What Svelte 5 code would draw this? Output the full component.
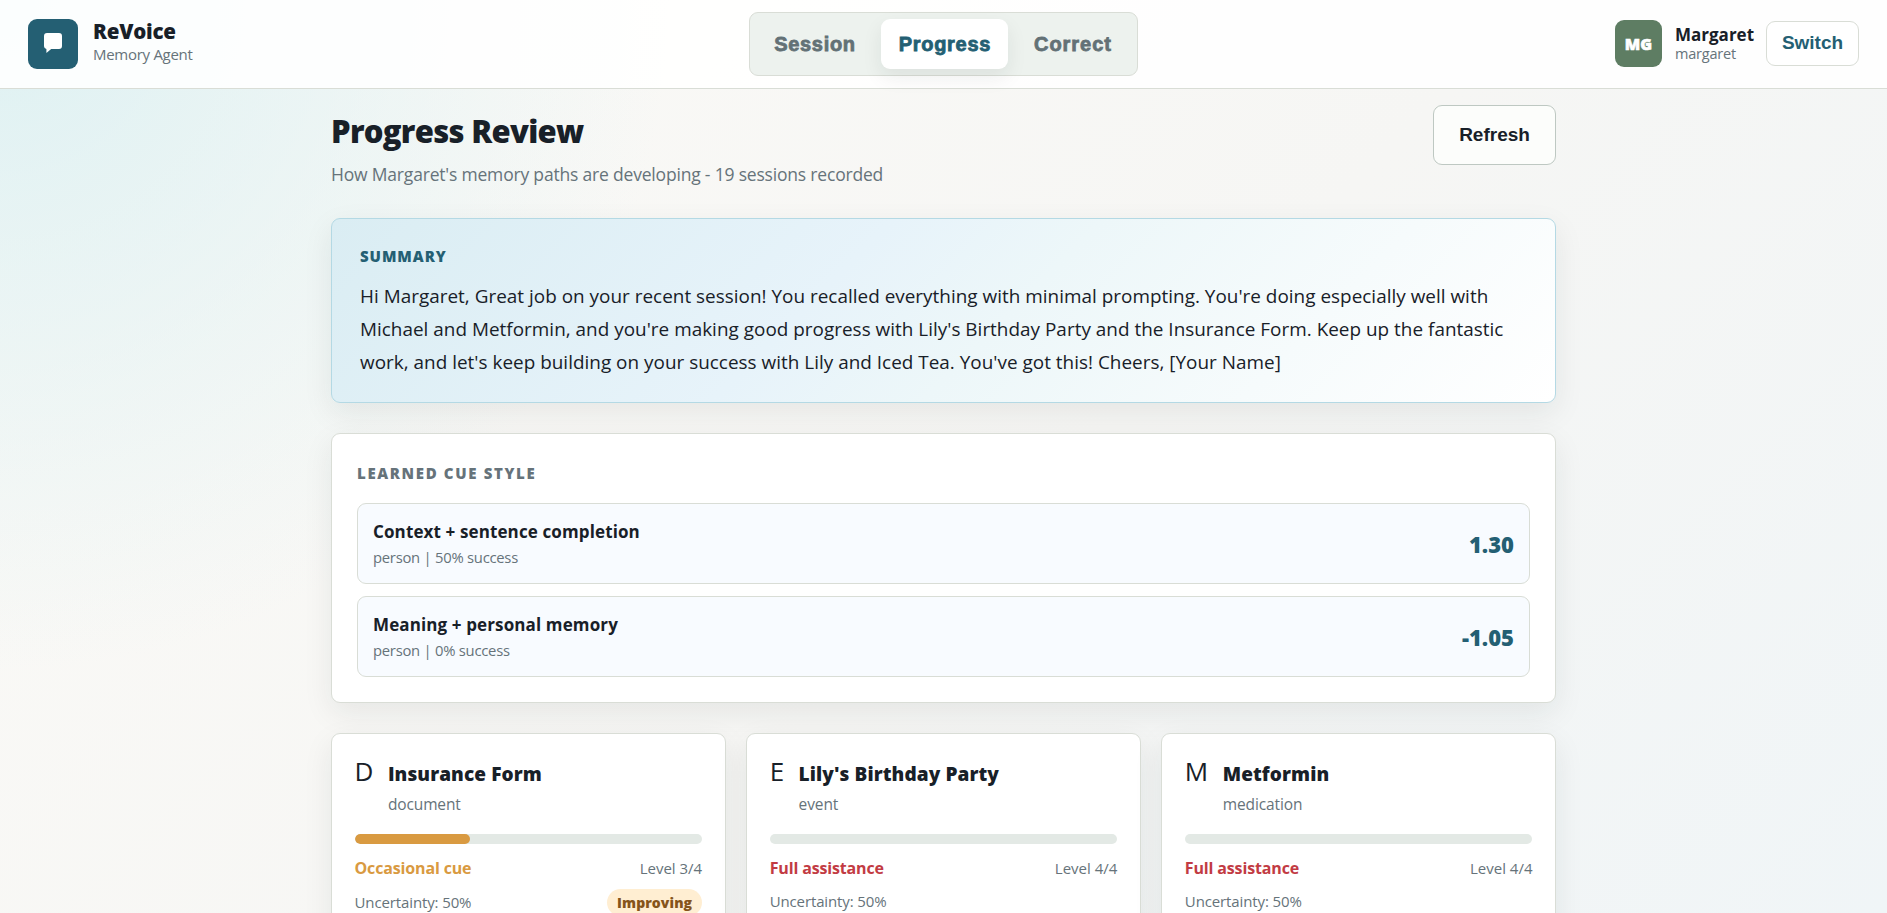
<script>
  let activeTab = "Progress";

  const tabs = ["Session", "Progress", "Correct"];

  const cues = [
    { name: "Context + sentence completion", detail: "person | 50% success", score: "1.30" },
    { name: "Meaning + personal memory", detail: "person | 0% success", score: "-1.05" },
  ];

  const memories = [
    { icon: "D", name: "Insurance Form", type: "document", status: "Occasional cue", tone: "amber", level: 3, uncertainty: 50, trend: "Improving" },
    { icon: "E", name: "Lily's Birthday Party", type: "event", status: "Full assistance", tone: "red", level: 4, uncertainty: 50 },
    { icon: "M", name: "Metformin", type: "medication", status: "Full assistance", tone: "red", level: 4, uncertainty: 50 },
  ];

  // lower level means more independence
  const progress = (level) => ((4 - level) / 3) * 100;
</script>

<div class="page">
  <header class="topbar">
    <div class="brand">
      <div class="brand-mark">
        <svg width="18" height="20" viewBox="0 0 18 20" aria-hidden="true">
          <path
            d="M3 0h12a3 3 0 0 1 3 3v10a3 3 0 0 1-3 3H7.2L2.4 20V16A3 3 0 0 1 0 13V3a3 3 0 0 1 3-3z"
            fill="#fff"
          />
        </svg>
      </div>
      <div class="brand-text">
        <div class="brand-name">ReVoice</div>
        <div class="brand-sub">Memory Agent</div>
      </div>
    </div>

    <nav class="tabs">
      {#each tabs as tab}
        <button
          class="tab"
          class:tab-active={activeTab === tab}
          on:click={() => (activeTab = tab)}>{tab}</button
        >
      {/each}
    </nav>

    <div class="user">
      <div class="avatar">MG</div>
      <div class="user-text">
        <div class="user-name">Margaret</div>
        <div class="user-id">margaret</div>
      </div>
      <button class="switch">Switch</button>
    </div>
  </header>

  <main>
    <div class="heading">
      <div>
        <h1>Progress Review</h1>
        <p class="subtitle">
          How Margaret's memory paths are developing - 19 sessions recorded
        </p>
      </div>
      <button class="refresh">Refresh</button>
    </div>

    <section class="card summary">
      <h2 class="label">Summary</h2>
      <p>
        Hi Margaret, Great job on your recent session! You recalled everything with minimal prompting. You're doing especially well with<br />
        Michael and Metformin, and you're making good progress with Lily's Birthday Party and the Insurance Form. Keep up the fantastic<br />
        work, and let's keep building on your success with Lily and Iced Tea. You've got this! Cheers, [Your Name]
      </p>
    </section>

    <section class="card cues">
      <h2 class="label">Learned cue style</h2>
      <div class="cue-list">
        {#each cues as cue}
          <div class="cue">
            <div>
              <div class="cue-name">{cue.name}</div>
              <div class="cue-detail">{cue.detail}</div>
            </div>
            <div class="score">{cue.score}</div>
          </div>
        {/each}
      </div>
    </section>

    <div class="memories">
      {#each memories as memory}
        <article class="card memory">
          <div class="memory-head">
            <span class="memory-icon">{memory.icon}</span>
            <div>
              <h3>{memory.name}</h3>
              <div class="memory-type">{memory.type}</div>
            </div>
          </div>
          <div class="track">
            <div class="fill {memory.tone}" style="width: {progress(memory.level)}%"></div>
          </div>
          <div class="status-row">
            <span class="status {memory.tone}">{memory.status}</span>
            <span class="level">Level {memory.level}/4</span>
          </div>
          <div class="uncertainty-row">
            <span class="uncertainty">Uncertainty: {memory.uncertainty}%</span>
            {#if memory.trend}
              <span class="pill">{memory.trend}</span>
            {/if}
          </div>
        </article>
      {/each}
    </div>
  </main>
</div>

<style>
  :global(body) {
    margin: 0;
    overflow: hidden;
  }

  .page {
    height: 100vh;
    overflow: hidden;
    color: #182028;
    font-family: "Open Sans", "Noto Sans", sans-serif;
    background:
      radial-gradient(circle at top left, rgba(219, 240, 242, 0.92), rgba(219, 240, 242, 0) 670px),
      linear-gradient(135deg, #fbfaf7 0%, #f6f6f4 55%, #f0f5f7 100%);
  }

  h1,
  h2,
  h3,
  p {
    margin: 0;
  }

  button {
    box-sizing: border-box;
    padding: 0;
    font-family: "Liberation Sans", Arial, sans-serif;
    font-weight: 700;
    cursor: pointer;
  }

  .topbar {
    box-sizing: border-box;
    height: 89px;
    padding: 0 28px;
    display: grid;
    grid-template-columns: 1fr auto 1fr;
    align-items: center;
    border-bottom: 1px solid #d9ddd6;
    background: rgba(255, 255, 255, 0.88);
  }

  .brand {
    display: flex;
    align-items: center;
    gap: 15px;
  }

  .brand-mark {
    width: 50px;
    height: 50px;
    border-radius: 9px;
    background: #245f73;
    display: flex;
    align-items: center;
    justify-content: center;
  }

  .brand-mark svg {
    margin-bottom: 2px;
  }

  .brand-text {
    padding-bottom: 4px;
  }

  .brand-name {
    font-size: 20.5px;
    font-weight: 800;
    line-height: 23px;
    letter-spacing: -0.2px;
  }

  .brand-sub {
    margin-top: 1px;
    font-size: 15px;
    line-height: 20px;
    letter-spacing: -0.28px;
    color: #66737a;
  }

  .tabs {
    display: flex;
    gap: 8px;
    padding: 6px;
    border: 1px solid #d9ddd6;
    border-radius: 9px;
    background: #edf2ee;
  }

  .tab {
    height: 50px;
    padding: 0 17px 0 18px;
    border: 0;
    border-radius: 9px;
    background: none;
    font-size: 20px;
    letter-spacing: 0.7px;
    color: #637176;
    -webkit-text-stroke: 0.8px currentColor;
  }

  .tab:last-child {
    padding-right: 19px;
    letter-spacing: 0.95px;
  }

  .tab-active {
    color: #245f73;
    background: #fff;
    box-shadow: 0 8px 20px rgba(24, 32, 40, 0.08);
  }

  .user {
    display: flex;
    align-items: center;
    justify-content: flex-end;
    padding-bottom: 1px;
  }

  .avatar {
    width: 47px;
    height: 47px;
    line-height: 48px;
    border-radius: 9px;
    background: #5e7d63;
    color: #fff;
    font-size: 16px;
    font-weight: 800;
    text-align: center;
    -webkit-text-stroke: 0.6px currentColor;
  }

  .user-text {
    margin: 0 13px;
    width: 78px;
    padding-bottom: 1px;
    white-space: nowrap;
  }

  .user-name {
    font-size: 17px;
    font-weight: 700;
    line-height: 20px;
  }

  .user-id {
    font-size: 14.5px;
    line-height: 17px;
    letter-spacing: -0.2px;
    color: #66737a;
  }

  .switch {
    width: 93px;
    height: 45px;
    padding-bottom: 1px;
    border: 1px solid #d9ddd6;
    border-radius: 9px;
    background: #fff;
    color: #245f73;
    font-size: 19px;
  }

  main {
    box-sizing: border-box;
    width: 1225px;
    margin: 0 auto;
    padding-top: 16px;
  }

  .heading {
    display: flex;
    justify-content: space-between;
    align-items: flex-start;
    margin-bottom: 30px;
  }

  h1 {
    padding-top: 1px;
    font-size: 31px;
    font-weight: 800;
    line-height: 50px;
    letter-spacing: -0.7px;
  }

  .subtitle {
    margin-top: 4px;
    font-size: 17.5px;
    line-height: 28px;
    letter-spacing: -0.19px;
    color: #66737a;
  }

  .refresh {
    width: 123px;
    height: 60px;
    padding-bottom: 1px;
    border: 1px solid #bec8c2;
    border-radius: 9px;
    background: #fcfdfb;
    color: #182028;
    font-size: 19px;
  }

  .card {
    border: 1px solid #d9ddd6;
    border-radius: 9px;
    background: #fff;
    box-shadow: 0 10px 30px rgba(24, 32, 40, 0.08);
  }

  .label {
    font-size: 15px;
    font-weight: 800;
    text-transform: uppercase;
  }

  .summary {
    padding: 27px 27px 23px 28px;
    margin-bottom: 30px;
    border-color: #b4d9e4;
    background: linear-gradient(135deg, #daedf3 0%, #e7f3fa 40%, #edf7f9 55%, #fff 100%);
  }

  .summary .label {
    line-height: 20px;
    letter-spacing: 0.95px;
    color: #245f73;
  }

  .summary p {
    margin-top: 14px;
    font-size: 18.9px;
    line-height: 33px;
    letter-spacing: 0.02px;
    white-space: nowrap;
  }

  .cues {
    padding: 25px;
    margin-bottom: 30px;
  }

  .cues .label {
    line-height: 28px;
    letter-spacing: 1.65px;
    color: #66737a;
  }

  .cue-list {
    display: flex;
    flex-direction: column;
    gap: 12px;
    margin-top: 16px;
  }

  .cue {
    display: flex;
    justify-content: space-between;
    align-items: center;
    padding: 15px 15px 14px;
    border: 1px solid #d9ddd6;
    border-radius: 9px;
    background: #f8fbff;
  }

  .cue-name {
    font-size: 17px;
    font-weight: 700;
    line-height: 26px;
    letter-spacing: 0.12px;
  }

  .cue-detail {
    margin-top: 1px;
    margin-bottom: 1px;
    font-size: 14.8px;
    line-height: 22px;
    letter-spacing: -0.25px;
    color: #66737a;
  }

  .score {
    font-size: 22px;
    font-weight: 800;
    color: #245f73;
  }

  .memories {
    display: grid;
    grid-template-columns: repeat(3, 1fr);
    gap: 20.5px;
  }

  .memory {
    padding: 23px 22.5px;
    height: 200px;
  }

  .memory-head {
    display: flex;
    gap: 14.5px;
    padding-top: 3px;
  }

  .memory-icon {
    font-size: 26px;
    line-height: 28px;
    margin-top: -3px;
  }

  h3 {
    font-size: 19px;
    font-weight: 800;
    line-height: 28px;
    letter-spacing: 0.1px;
  }

  .memory-type {
    margin-top: 4px;
    font-size: 15.5px;
    line-height: 24px;
    letter-spacing: -0.12px;
    color: #66737a;
  }

  .track {
    margin-top: 18px;
    height: 10px;
    border-radius: 5px;
    background: #e3e9e5;
    overflow: hidden;
  }

  .fill {
    height: 100%;
    border-radius: 5px;
  }

  .fill.amber {
    background: #d99a41;
  }

  .status-row {
    display: flex;
    justify-content: space-between;
    margin-top: 12px;
    line-height: 24px;
  }

  .status {
    font-size: 16px;
    font-weight: 700;
    letter-spacing: -0.15px;
  }

  .status.amber {
    color: #d99a41;
  }

  .status.red {
    color: #c23b43;
  }

  .level {
    font-size: 15px;
    color: #66737a;
  }

  .uncertainty-row {
    display: flex;
    justify-content: space-between;
    align-items: center;
    margin-top: 9px;
    line-height: 25px;
  }

  .uncertainty {
    font-size: 15px;
    letter-spacing: -0.12px;
    color: #66737a;
  }

  .pill {
    padding: 0 10px;
    border-radius: 14px;
    background: #ffeed2;
    color: #85541a;
    font-size: 14px;
    font-weight: 800;
    line-height: 27px;
    letter-spacing: 0.08px;
  }
</style>
